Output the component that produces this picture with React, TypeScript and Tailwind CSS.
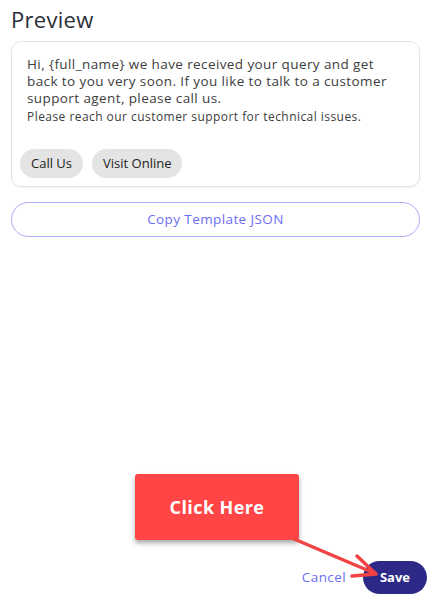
export default function App() {
  return (
    <div
      className="relative w-[431px] h-[600px] bg-white flex flex-col overflow-hidden"
      style={{ fontFamily: '"Open Sans", "Liberation Sans", sans-serif' }}
    >
      <div className="px-[11px] pt-[4px]">
        <h2 className="text-[22px] leading-[30px] text-[#2a2f3a] tracking-[0.3px]">Preview</h2>

        <div className="mt-[7px] rounded-[10px] border border-[#e3e3e3] shadow-[0_1px_2px_rgba(0,0,0,0.06)] pl-[15px] pr-[12px] pt-[14px] pb-[8px]">
          <p className="text-[13.5px] leading-[17px] tracking-[0.4px] text-[#3d3d3d]">
            Hi, {'{full_name}'} we have received your query and get back to you very soon. If you like to talk to a customer
            support agent, please call us.
          </p>
          <p className="text-[12px] leading-[17px] tracking-[0.45px] text-[#3d3d3d] mt-[1px]">
            Please reach our customer support for technical issues.
          </p>
          <div className="flex gap-[9px] mt-[24px] -ml-[7px]">
            <span className="h-[29px] px-[11px] rounded-full bg-[#e4e4e4] text-[13px] text-[#222] flex items-center">Call Us</span>
            <span className="h-[29px] px-[11px] rounded-full bg-[#e4e4e4] text-[13px] text-[#222] flex items-center">Visit Online</span>
          </div>
        </div>

        <button className="mt-[15px] w-full h-[35px] rounded-full border border-[#a9adfd] text-[13.5px] tracking-[0.4px] text-[#6d6ff2] flex items-center justify-center">
          Copy Template JSON
        </button>
      </div>

      <div className="flex-1" />

      <div className="flex items-center justify-end gap-[17px] pr-[4px] pb-[6px]">
        <span className="text-[13.5px] tracking-[0.4px] text-[#6d6ff2]">Cancel</span>
        <button className="h-[33px] w-[64px] rounded-full bg-[#2d2a87] text-white text-[13px] font-bold flex items-center justify-center">
          Save
        </button>
      </div>

      <div className="absolute left-[135px] top-[474px] w-[164px] h-[66px] rounded-[3px] bg-[#ff4545] shadow-[0_3px_5px_rgba(0,0,0,0.35)] flex items-center justify-center">
        <span className="text-white text-[18px] font-bold tracking-[0.4px]">Click Here</span>
      </div>

      <svg className="absolute left-0 top-0 pointer-events-none" width="431" height="600">
        <line x1="294" y1="539" x2="374" y2="573" stroke="#f14343" strokeWidth="3.5" strokeLinecap="round" />
        <polyline points="357,556 376,574 352,576" fill="none" stroke="#f14343" strokeWidth="3.5" strokeLinecap="round" strokeLinejoin="round" />
      </svg>
    </div>
  );
}
